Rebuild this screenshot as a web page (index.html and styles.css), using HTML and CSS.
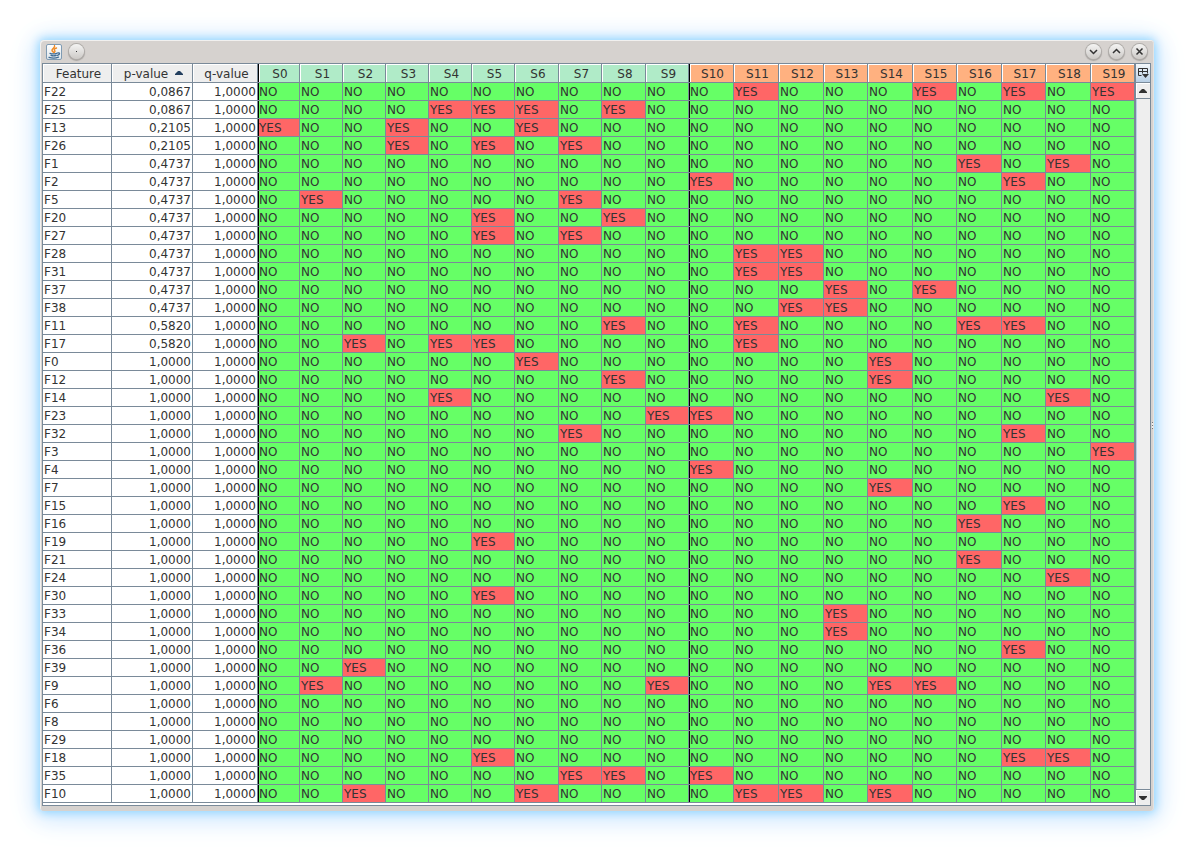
FILE: index.html
```html
<!DOCTYPE html>
<html lang="en">
<head>
<meta charset="utf-8">
<title>Feature table</title>
<link rel="stylesheet" href="styles.css">
</head>
<body>
<main class="window">
  <header class="titlebar">
    <svg class="app-icon" width="16" height="16" viewBox="0 0 16 16" aria-hidden="true">
      <defs><linearGradient id="tile" x2="0" y2="1"><stop stop-color="#fff"/><stop offset="1" stop-color="#dde5ea"/></linearGradient></defs>
      <rect x=".5" y=".5" width="15" height="15" rx="1.5" fill="url(#tile)" stroke="#7f9bb3"/>
      <path d="M8.500 1.500c1.200 2-3 3.200-2.500 5 .2 1 1.200 1.500 1.800 2M10.500 4c-2.500.8-2.800 1.700-1.800 2.600.6.600.4 1.100-.2 1.700" fill="none" stroke="#f08a25" stroke-width="1.400" stroke-linecap="round"/>
      <path d="M4 9.300c1.500.6 5 .6 6.800 0M5 11.300c1.400.5 3.900.5 5.200 0M3 13.300c2.500.8 7 .8 9.500-.2M11.500 9c2.600-.8 2.800 1.500 0 2.300" fill="none" stroke="#3f6b94" stroke-width="1.300" stroke-linecap="round"/>
    </svg>
    <button class="round" aria-label="Window menu"><svg width="15" height="15" viewBox="0 0 15 15"><rect x="7" y="7" width="1" height="1" fill="#333"/></svg></button>
    <span class="spacer"></span>
    <button class="round" aria-label="Minimize"><svg width="15" height="15" viewBox="0 0 15 15"><path d="M4 6l3.500 3.500L11 6"/></svg></button>
    <button class="round" aria-label="Maximize"><svg width="15" height="15" viewBox="0 0 15 15"><path d="M4 9l3.500-3.500L11 9"/></svg></button>
    <button class="round" aria-label="Close"><svg width="15" height="15" viewBox="0 0 15 15"><path d="M4.500 4.500l6 6M10.500 4.500l-6 6"/></svg></button>
  </header>
  <section class="pane">
    <table class="grid">
      <colgroup id="cols"></colgroup>
      <thead><tr id="head"></tr></thead>
      <tbody id="rows"></tbody>
    </table>
    <div class="side">
      <button class="columns" aria-label="Choose columns">
        <svg width="12" height="12" viewBox="0 0 12 12"><path d="M4.500 8.500h-3v-7h9v5M1.500 4.500h9M5.500 1.500v5" fill="none" stroke="#333"/><path d="M5 7h7L8.500 11z" fill="#333"/></svg>
      </button>
      <button class="arrow up" aria-label="Scroll up"><svg width="8" height="4" viewBox="0 0 8 4"><path d="M0 4V3l3-3h2l3 3v1z"/></svg></button>
      <div class="track"></div>
      <button class="arrow down" aria-label="Scroll down"><svg width="8" height="4" viewBox="0 0 8 4"><path d="M0 0v1l3 3h2l3-3V0z"/></svg></button>
    </div>
  </section>
  <span class="grip" aria-hidden="true"></span>
</main>
<script src="table.js"></script>
</body>
</html>
```
FILE: styles.css
```css
* {
  box-sizing: border-box;
}

body {
  margin: 0;
  padding: 40px;
  background: #fff;
  color: #333;
  font: 12px/16px "DejaVu Sans", sans-serif;
}

.window {
  position: relative;
  padding: 0 3px 5px 2px;
  border-radius: 4px;
  background: #d6d2cf;
  box-shadow: inset 1px 1px 0 #f1f0ef, inset -1px 0 0 #e4e2e0, 0 0 10px 1px #8cd4ff, 0 3px 22px 4px #cbe6ff, 0 4px 36px 4px #eef6ff;
}

.titlebar {
  display: flex;
  align-items: center;
  gap: 8px;
  height: 23px;
  padding: 0 4px;
}

.app-icon {
  margin-right: -1px;
}

.spacer {
  flex: 1;
}

button {
  display: flex;
  align-items: center;
  justify-content: center;
  margin: 0;
  padding: 0;
  border: 0;
}

.round {
  width: 15px;
  height: 15px;
  border-radius: 50%;
  background: linear-gradient(#f4f4f3, #cdcac7);
  box-shadow: 0 0 0 1px #b0adaa, 0 1px 1px 1px #aaa6a3;
}

.round path {
  fill: none;
  stroke: #333;
  stroke-width: 1.5;
}

.pane {
  display: flex;
  border: 1px solid #7a8a99;
  background: #fff;
}

.grid {
  flex: 1;
  align-self: flex-start;
  width: 0;
  margin-bottom: 2px;
  table-layout: fixed;
  border-collapse: separate;
  border-spacing: 0;
}

th,
td {
  height: 18px;
  padding: 1px 1px 0;
  border: solid #7a8a99;
  border-width: 0 1px 1px 0;
  overflow: hidden;
  text-align: left;
  white-space: nowrap;
  font-weight: normal;
}

th {
  height: 19px;
  padding: 1px 0 0 3px;
  background: #eee;
  box-shadow: inset 1px 1px 0 #fff;
  text-align: center;
}

.low {
  background: #b0ebc8;
}

.high {
  background: #ffb180;
}

.number {
  text-align: right;
}

.no {
  background: #66ff66;
}

.yes {
  background: #ff6666;
}

.divide {
  box-shadow: inset 1px 0 0 #000;
}

th.divide {
  box-shadow: inset 1px 0 0 #000, inset 2px 1px 0 #fff;
}

.sort {
  margin-left: 7px;
  vertical-align: 3px;
}

.side {
  display: flex;
  flex-direction: column;
  width: 15px;
  border-left: 1px solid #7a8a99;
}

.columns {
  height: 19px;
  border-bottom: 1px solid #7a8a99;
  background: linear-gradient(#f4f8fb, #b8cfe5);
}

.arrow {
  height: 16px;
  background: #eee;
  box-shadow: inset 1px 1px 0 #fff;
}

.arrow path {
  fill: #333;
}

.up {
  border-bottom: 1px solid #7a8a99;
}

.down {
  border-top: 1px solid #7a8a99;
}

.track {
  flex: 1;
  border-left: 1px solid #b8cfe5;
  background: #eee;
}

.grip {
  position: absolute;
  right: 1px;
  top: calc(50% - 4px);
  width: 1px;
  height: 7px;
  background: repeating-linear-gradient(#777 0 1px, #eee 1px 3px);
}
```
FILE: table.js
```javascript
const widths = [69, 81, 65, 42, 43, 43, 43, 43, 43, 44, 43, 44, 43, 45, 45, 45, 44, 45, 44, 45, 44, 45, 44];

// feature, p-value, samples where the feature is present
const data = [
  ["F22", "0,0867", [11, 15, 17, 19]],
  ["F25", "0,0867", [4, 5, 6, 8]],
  ["F13", "0,2105", [0, 3, 6]],
  ["F26", "0,2105", [3, 5, 7]],
  ["F1", "0,4737", [16, 18]],
  ["F2", "0,4737", [10, 17]],
  ["F5", "0,4737", [1, 7]],
  ["F20", "0,4737", [5, 8]],
  ["F27", "0,4737", [5, 7]],
  ["F28", "0,4737", [11, 12]],
  ["F31", "0,4737", [11, 12]],
  ["F37", "0,4737", [13, 15]],
  ["F38", "0,4737", [12, 13]],
  ["F11", "0,5820", [8, 11, 16, 17]],
  ["F17", "0,5820", [2, 4, 5, 11]],
  ["F0", "1,0000", [6, 14]],
  ["F12", "1,0000", [8, 14]],
  ["F14", "1,0000", [4, 18]],
  ["F23", "1,0000", [9, 10]],
  ["F32", "1,0000", [7, 17]],
  ["F3", "1,0000", [19]],
  ["F4", "1,0000", [10]],
  ["F7", "1,0000", [14]],
  ["F15", "1,0000", [17]],
  ["F16", "1,0000", [16]],
  ["F19", "1,0000", [5]],
  ["F21", "1,0000", [16]],
  ["F24", "1,0000", [18]],
  ["F30", "1,0000", [5]],
  ["F33", "1,0000", [13]],
  ["F34", "1,0000", [13]],
  ["F36", "1,0000", [17]],
  ["F39", "1,0000", [2]],
  ["F9", "1,0000", [1, 9, 14, 15]],
  ["F6", "1,0000", []],
  ["F8", "1,0000", []],
  ["F29", "1,0000", []],
  ["F18", "1,0000", [5, 17, 18]],
  ["F35", "1,0000", [7, 8, 10]],
  ["F10", "1,0000", [2, 6, 11, 12, 14]]
];

const samples = Array.from({ length: 20 }, (_, i) => i);
const divide = i => (i % 10 === 0 ? " divide" : "");
const arrow = '<svg class="sort" width="8" height="4" viewBox="0 0 8 4"><path d="M0 4V3l3-3h2l3 3v1z" fill="#24405f"/></svg>';

document.getElementById("cols").innerHTML = widths.map(w => `<col style="width:${w}px">`).join("");

document.getElementById("head").innerHTML =
  `<th>Feature</th><th aria-sort="ascending">p-value${arrow}</th><th>q-value</th>` +
  samples.map(i => `<th class="${i < 10 ? "low" : "high"}${divide(i)}">S${i}</th>`).join("");

document.getElementById("rows").innerHTML = data.map(([name, p, present]) =>
  `<tr><td>${name}</td><td class="number">${p}</td><td class="number">1,0000</td>` +
  samples.map(i => {
    const on = present.includes(i);
    return `<td class="${on ? "yes" : "no"}${divide(i)}">${on ? "YES" : "NO"}</td>`;
  }).join("") + "</tr>").join("");
```
